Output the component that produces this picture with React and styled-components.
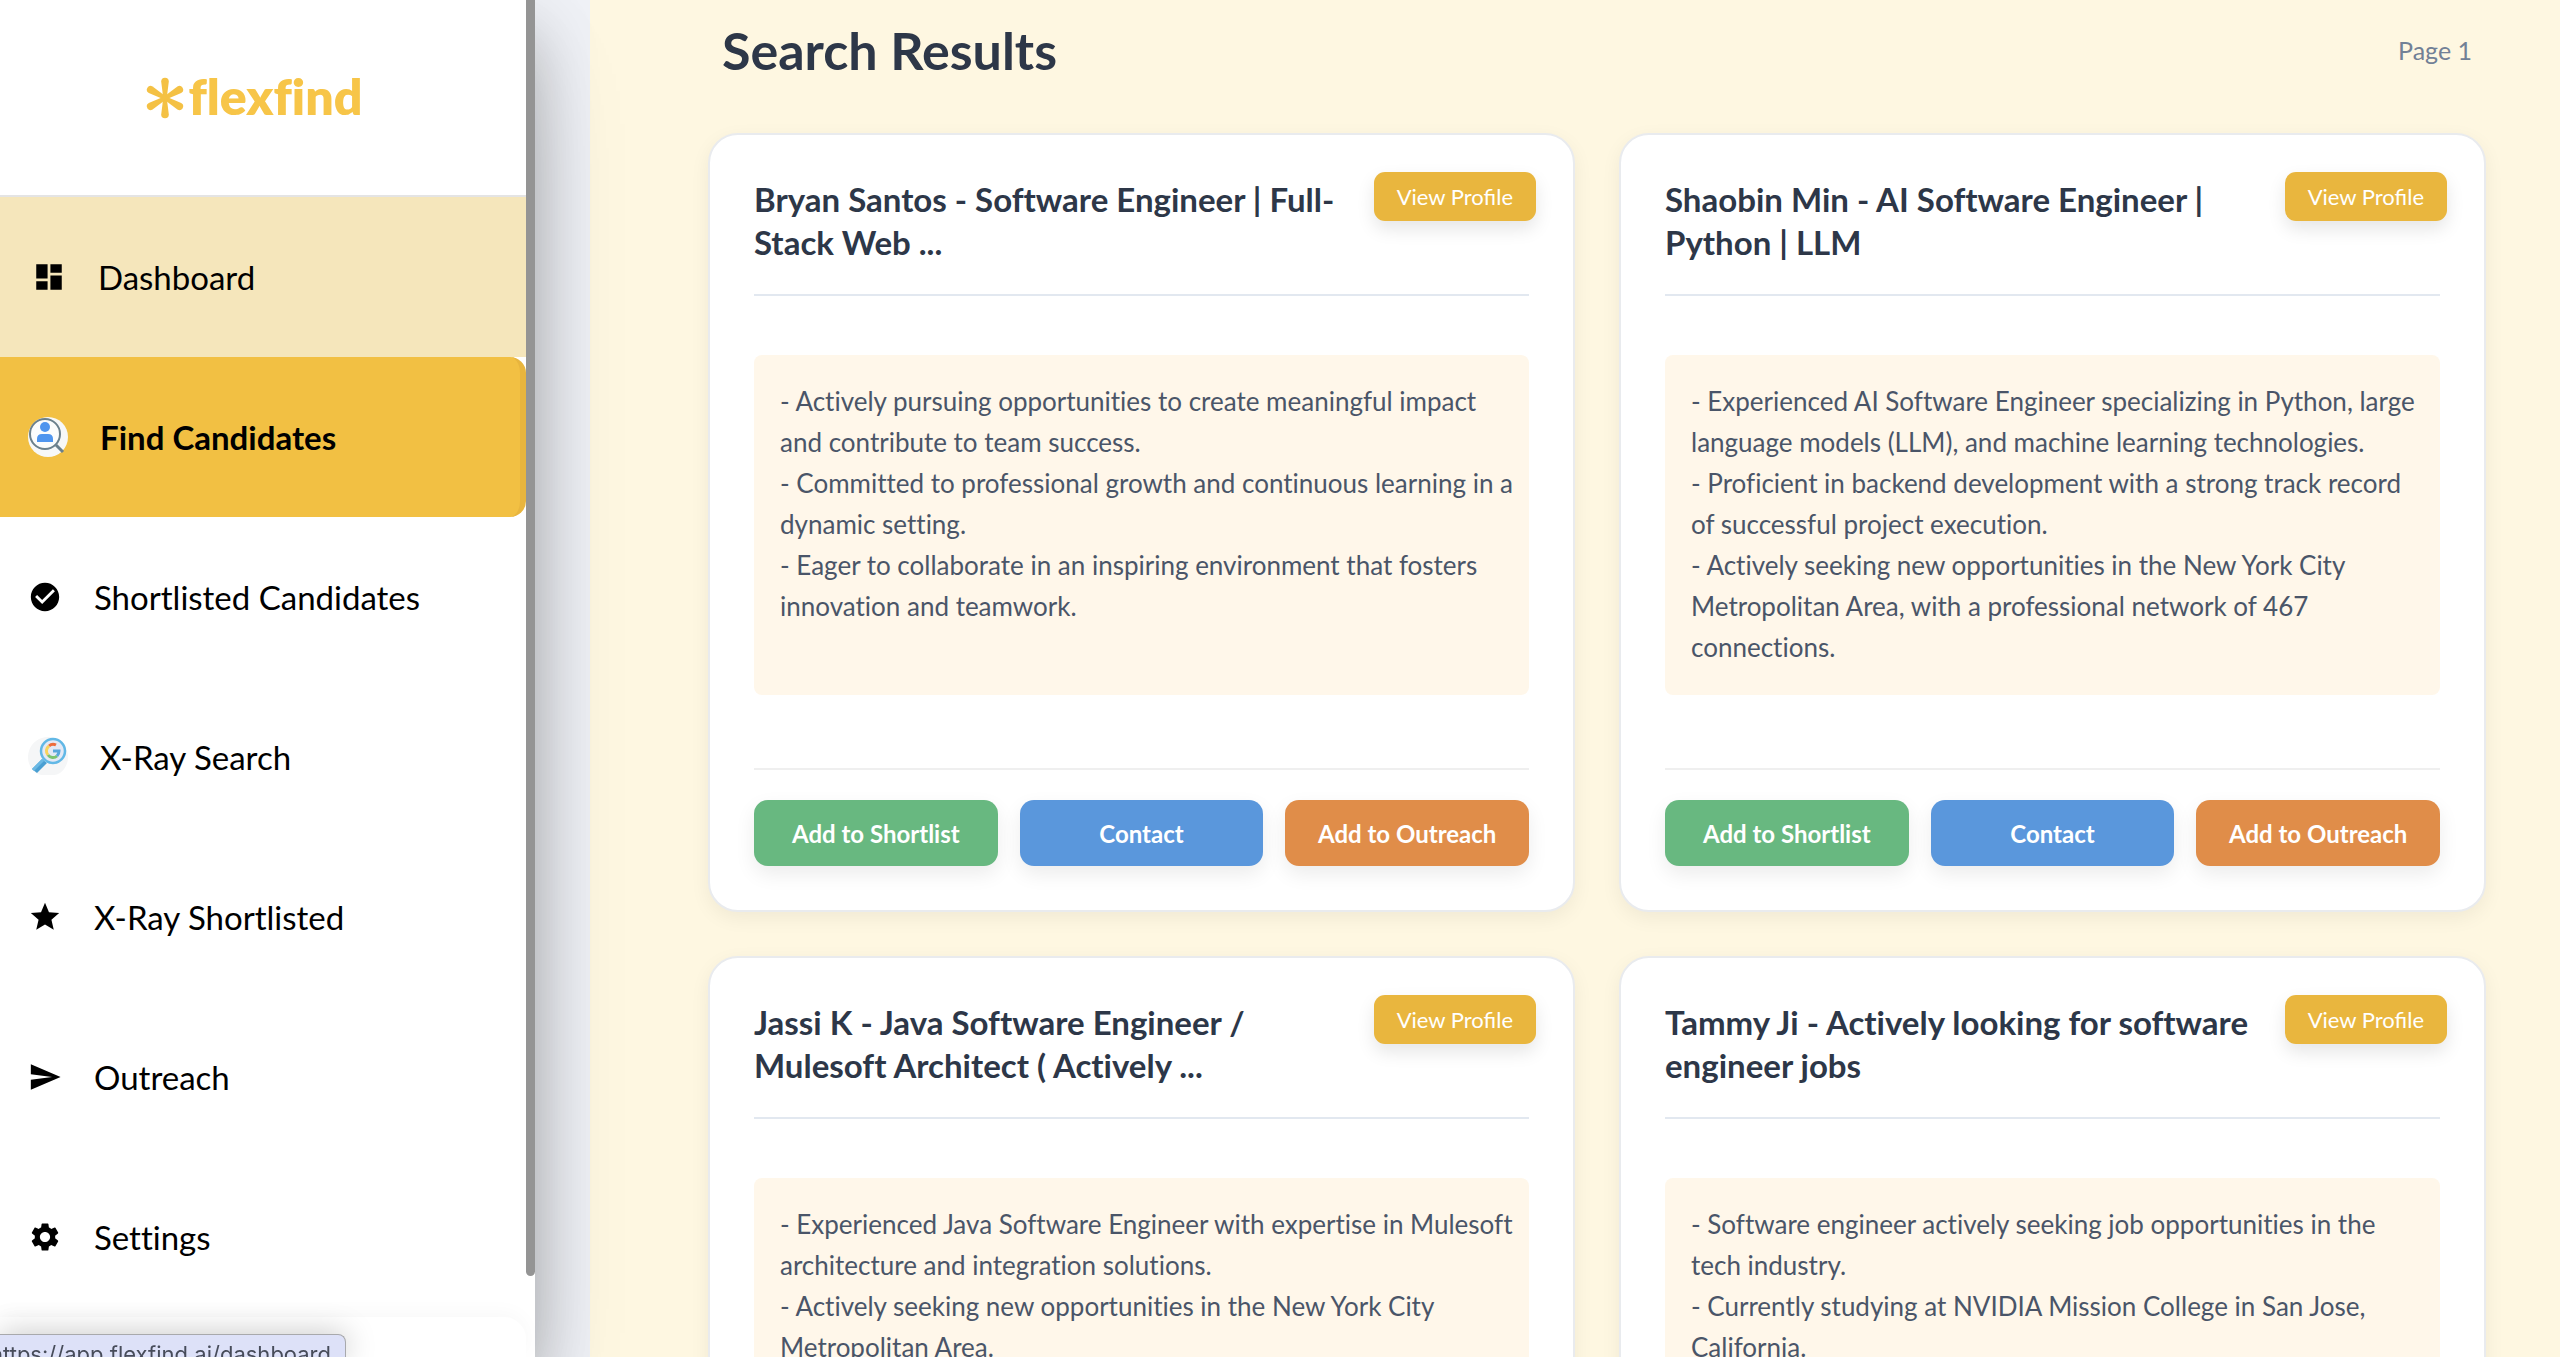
import { Component } from "react";
import styled, { createGlobalStyle, css } from "styled-components"
import { MdDashboard, MdCheckCircle, MdStar, MdSend, MdSettings } from "react-icons/md"

const navItems = [
    { id: 1, label: "Dashboard", icon: <MdDashboard />, hovered: true },
    { id: 2, label: "Find Candidates", icon: <PersonSearchIcon />, avatar: true, active: true },
    { id: 3, label: "Shortlisted Candidates", icon: <MdCheckCircle /> },
    { id: 4, label: "X-Ray Search", icon: <XRayIcon />, avatar: true },
    { id: 5, label: "X-Ray Shortlisted", icon: <MdStar /> },
    { id: 6, label: "Outreach", icon: <MdSend /> },
    { id: 7, label: "Settings", icon: <MdSettings /> },
]

const candidates = [
    {
        id: 1,
        title: "Bryan Santos - Software Engineer | Full-Stack Web ...",
        summary: [
            "Actively pursuing opportunities to create meaningful impact and contribute to team success.",
            "Committed to professional growth and continuous learning in a dynamic setting.",
            "Eager to collaborate in an inspiring environment that fosters innovation and teamwork.",
        ],
    },
    {
        id: 2,
        title: "Shaobin Min - AI Software Engineer | Python | LLM",
        summary: [
            "Experienced AI Software Engineer specializing in Python, large language models (LLM), and machine learning technologies.",
            "Proficient in backend development with a strong track record of\u00a0successful project execution.",
            "Actively seeking new opportunities in the New York City Metropolitan Area, with a professional network of 467 connections.",
        ],
    },
    {
        id: 3,
        title: "Jassi K - Java Software Engineer / Mulesoft Architect ( Actively ...",
        summary: [
            "Experienced Java Software Engineer with expertise in Mulesoft architecture and integration solutions.",
            "Actively seeking new opportunities in the New York City Metropolitan Area.",
        ],
    },
    {
        id: 4,
        title: "Tammy Ji - Actively looking for software engineer jobs",
        summary: [
            "Software engineer actively seeking job opportunities in the tech industry.",
            "Currently studying at NVIDIA Mission College in San Jose, California.",
        ],
    },
]

function PersonSearchIcon() {
    return (
        <svg viewBox="0 0 40 40" aria-hidden="true">
            <circle cx="20" cy="20" r="20" fill="#f7f8f8" />
            <path d="M28 28l7 7" stroke="#6b808c" strokeWidth="3" />
            <circle cx="17" cy="17" r="15" fill="#fbfcfc" stroke="#6b808c" strokeWidth="2" />
            <circle cx="17" cy="10" r="5" fill="#4f95ee" />
            <path d="M9 25v-3q0-5 5-5h6q5 0 5 5v3z" fill="#4f95ee" />
        </svg>
    )
}

function XRayIcon() {
    return (
        <svg viewBox="0 0 40 40" aria-hidden="true">
            <path d="M20 0a20 20 0 0 1 12 36q-3 2-6 2H14q-3 0-6-2A20 20 0 0 1 20 0z" fill="#f5f6f7" />
            <path d="M4 32L14 22l5 4-10 10z" fill="#4a9fd2" />
            <path d="M4 32L14 22l2 2-10 10z" fill="#6bb9e4" />
            <circle cx="25" cy="14" r="12" fill="#e4e9f5" stroke="#62b8e6" strokeWidth="2.5" />
            <path d="M21 9a6 6 0 0 1 7-1" fill="none" stroke="#ee6c3c" strokeWidth="3" />
            <path d="M20 18a6 6 0 0 1 1-9" fill="none" stroke="#f8d35c" strokeWidth="3" />
            <path d="M20 18a6 6 0 0 0 9 1" fill="none" stroke="#7cc470" strokeWidth="3" />
            <path d="M25 14h6q0 3-2 5" fill="none" stroke="#5aa7dc" strokeWidth="3" />
        </svg>
    )
}

function LogoMark() {
    return (
        <svg width="38" height="42" viewBox="-19 -21 38 42" fill="#f4c144" aria-hidden="true">
            {[0, 60, 120, 180, 240, 300].map(angle => (
                <path key={angle} transform={`rotate(${angle})`} d="M-1.8 0L-3.8 -16.5A3.8 3.8 0 0 1 3.8 -16.5L1.8 0z" />
            ))}
        </svg>
    )
}

class CandidateCard extends Component {
    render() {
        const { title, summary } = this.props.candidate
        return (
            <Card>
                <CardTitle>{title}</CardTitle>
                <ProfileButton type="button">View Profile</ProfileButton>
                <Summary>
                    {summary.map(line => <p key={line}>{`- ${line}`}</p>)}
                </Summary>
                <Actions>
                    <ActionButton type="button" $color="#68b880">Add to Shortlist</ActionButton>
                    <ActionButton type="button" $color="#5a97dc">Contact</ActionButton>
                    <ActionButton type="button" $color="#e08d49">Add to Outreach</ActionButton>
                </Actions>
            </Card>
        )
    }
}

export default class App extends Component {
    render() {
        return (
            <>
                <GlobalStyle />
                <Layout>
                    <Sidebar>
                        <Brand href="#"><LogoMark /><span>flexfind</span></Brand>
                        <Nav>
                            {navItems.map(item => (
                                <NavLink key={item.id} href="#" $active={item.active} $hovered={item.hovered}>
                                    <NavIcon $avatar={item.avatar}>{item.icon}</NavIcon>
                                    {item.label}
                                </NavLink>
                            ))}
                        </Nav>
                        <UserPanel />
                        <ScrollThumb />
                    </Sidebar>
                    <Main>
                        <ResultsHeader>
                            <h1>Search Results</h1>
                            <span>Page 1</span>
                        </ResultsHeader>
                        <Results>
                            {candidates.map(candidate => (
                                <CandidateCard key={candidate.id} candidate={candidate} />
                            ))}
                        </Results>
                    </Main>
                </Layout>
                <StatusBubble><span>https://app.flexfind.ai/dashboard</span></StatusBubble>
            </>
        )
    }
}

const GlobalStyle = createGlobalStyle`
    * {
        box-sizing: border-box;
    }
    body {
        margin: 0;
        overflow: hidden;
        background: #eff1f6;
        font-family: Lato, "Open Sans", sans-serif;
        font-variant-ligatures: none;
    }
    h1, h2, p {
        margin: 0;
    }
    a {
        color: inherit;
        text-decoration: none;
    }
    button {
        font-family: inherit;
        border: 0;
        cursor: pointer;
    }
`

const Layout = styled.div`
    display: flex;
    gap: 55px;
    height: 100vh;
    overflow: hidden;
`

const Sidebar = styled.aside`
    position: relative;
    z-index: 1;
    display: flex;
    flex-direction: column;
    flex: 0 0 535px;
    padding-right: 9px;
    background: #fff;
    box-shadow: 0 50px 100px -24px rgba(0, 0, 0, 0.25), 0 32px 60px rgba(0, 0, 0, 0.22);
`

const Brand = styled.a`
    display: flex;
    flex: 0 0 197px;
    align-items: center;
    justify-content: center;
    gap: 5px;
    padding-right: 18px;
    border-bottom: 2px solid #e4e4e4;
    color: #f7c548;
    font-size: 50px;
    font-weight: 800;
    line-height: 60px;
    span {
        padding-bottom: 4px;
    }
`

const Nav = styled.nav`
    display: flex;
    flex-direction: column;
`

const NavLink = styled.a`
    display: flex;
    align-items: center;
    gap: 32px;
    height: 160px;
    padding: 0 28px;
    font-size: 33px;
    line-height: 48px;
    color: #000;
    ${props => props.$hovered && css`
        padding-left: 32px;
        background: #f5e6bb;
    `}
    ${props => props.$active && css`
        border-right: 6px solid #e8b53e;
        border-radius: 0 16px 16px 0;
        background: #f2c043;
        font-weight: 700;
    `}
`

const NavIcon = styled.span`
    display: flex;
    svg {
        width: ${props => props.$avatar ? "40px" : "34px"};
        height: ${props => props.$avatar ? "40px" : "34px"};
    }
`

const UserPanel = styled.div`
    flex: 1;
    border-radius: 0 22px 0 0;
    box-shadow: 0 -4px 20px rgba(0, 0, 0, 0.03);
`

const ScrollThumb = styled.div`
    position: absolute;
    top: 0;
    right: 0;
    width: 9px;
    height: 94%;
    border-radius: 0 0 5px 5px;
    background: #949494;
`

const Main = styled.main`
    flex: 1;
    min-width: 0;
    padding: 18px 74px 0 118px;
    background: #fef7e1;
`

const ResultsHeader = styled.header`
    display: flex;
    align-items: center;
    justify-content: space-between;
    padding: 0 14px;
    margin-bottom: 51px;
    h1 {
        color: #2d3748;
        font-size: 52px;
        line-height: 64px;
    }
    span {
        color: #718096;
        font-size: 25px;
    }
`

const Results = styled.section`
    display: grid;
    grid-template-columns: 1fr 1fr;
    gap: 44px;
`

const Card = styled.article`
    position: relative;
    display: flex;
    flex-direction: column;
    padding: 43px 44px 44px;
    border: 2px solid #e9ebee;
    border-radius: 30px;
    background: #fff;
    box-shadow: 0 6px 20px rgba(0, 0, 0, 0.06);
`

const CardTitle = styled.h2`
    padding: 0 180px 30px 0;
    margin-bottom: 59px;
    border-bottom: 2px solid #e2e8f0;
    color: #2d3748;
    font-size: 33px;
    line-height: 43px;
`

const ProfileButton = styled.button`
    position: absolute;
    top: 37px;
    right: 37px;
    padding: 8px 23px;
    border-radius: 11px;
    background: #e9b63e;
    color: #fff;
    font-size: 22px;
    line-height: 33px;
    font-variant-ligatures: normal;
    box-shadow: 0 8px 18px rgba(0, 0, 0, 0.1);
`

const Summary = styled.div`
    flex: 1;
    min-height: 340px;
    padding: 26px 12px 26px 26px;
    margin-bottom: 73px;
    border-radius: 8px;
    background: #fff7ea;
    color: #4a5568;
    font-size: 26px;
    line-height: 41px;
`

const Actions = styled.div`
    display: grid;
    grid-template-columns: repeat(3, 1fr);
    gap: 22px;
    padding-top: 30px;
    border-top: 2px solid #efefef;
`

const ActionButton = styled.button`
    height: 66px;
    border-radius: 14px;
    background: ${props => props.$color};
    color: #fff;
    font-size: 24px;
    font-weight: 700;
    box-shadow: 0 8px 20px rgba(0, 0, 0, 0.08);
`

// link preview in the window corner, its start runs off the left edge
const StatusBubble = styled.div`
    position: fixed;
    left: 0;
    bottom: 0;
    z-index: 2;
    display: flex;
    justify-content: flex-end;
    width: 346px;
    height: 23px;
    padding: 5px 14px 0 0;
    border: 1px solid #a8a9ac;
    border-width: 1px 1px 0 0;
    border-radius: 0 8px 0 0;
    background: #dde1f8;
    color: #474c5a;
    font-family: Inter, Roboto, sans-serif;
    font-size: 22px;
    line-height: 28px;
    box-shadow: 0 0 30px rgba(0, 0, 0, 0.25);
`
